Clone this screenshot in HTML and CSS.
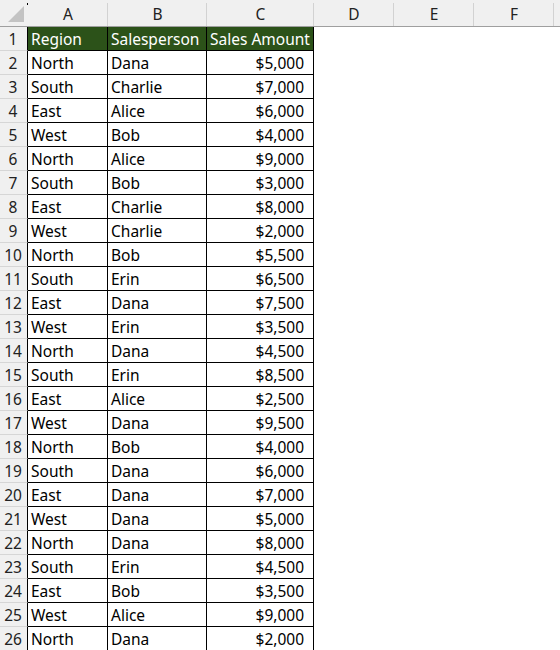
FILE: index.html
```html
<!DOCTYPE html>
<html lang="en">

<head>
  <meta charset="UTF-8">
  <meta name="viewport" content="width=device-width, initial-scale=1.0">
  <title>Sales</title>
  <link rel="stylesheet" href="styles.css">
</head>

<body>
  <table class="sheet">
    <colgroup>
      <col class="c-rn">
      <col class="c-a">
      <col class="c-b">
      <col class="c-c">
      <col class="c-d">
      <col class="c-e">
      <col class="c-f">
      <col class="c-rest">
    </colgroup>
    <tr class="head">
      <th class="corner">
        <svg width="17" height="17" viewBox="0 0 17 17"><polygon points="16,0 16,16 0,16" fill="#c3c3c3"/></svg>
      </th>
      <th>A</th>
      <th>B</th>
      <th>C</th>
      <th>D</th>
      <th>E</th>
      <th>F</th>
      <th class="rest"></th>
    </tr>
    <tr class="title">
      <th class="rn">1</th>
      <td>Region</td>
      <td>Salesperson</td>
      <td>Sales Amount</td>
      <td class="blank"></td><td class="blank"></td><td class="blank"></td><td class="blank"></td>
    </tr>
    <tr><th class="rn">2</th><td>North</td><td>Dana</td><td class="num">$5,000</td><td class="blank"></td><td class="blank"></td><td class="blank"></td><td class="blank"></td></tr>
    <tr><th class="rn">3</th><td>South</td><td>Charlie</td><td class="num">$7,000</td><td class="blank"></td><td class="blank"></td><td class="blank"></td><td class="blank"></td></tr>
    <tr><th class="rn">4</th><td>East</td><td>Alice</td><td class="num">$6,000</td><td class="blank"></td><td class="blank"></td><td class="blank"></td><td class="blank"></td></tr>
    <tr><th class="rn">5</th><td>West</td><td>Bob</td><td class="num">$4,000</td><td class="blank"></td><td class="blank"></td><td class="blank"></td><td class="blank"></td></tr>
    <tr><th class="rn">6</th><td>North</td><td>Alice</td><td class="num">$9,000</td><td class="blank"></td><td class="blank"></td><td class="blank"></td><td class="blank"></td></tr>
    <tr><th class="rn">7</th><td>South</td><td>Bob</td><td class="num">$3,000</td><td class="blank"></td><td class="blank"></td><td class="blank"></td><td class="blank"></td></tr>
    <tr><th class="rn">8</th><td>East</td><td>Charlie</td><td class="num">$8,000</td><td class="blank"></td><td class="blank"></td><td class="blank"></td><td class="blank"></td></tr>
    <tr><th class="rn">9</th><td>West</td><td>Charlie</td><td class="num">$2,000</td><td class="blank"></td><td class="blank"></td><td class="blank"></td><td class="blank"></td></tr>
    <tr><th class="rn">10</th><td>North</td><td>Bob</td><td class="num">$5,500</td><td class="blank"></td><td class="blank"></td><td class="blank"></td><td class="blank"></td></tr>
    <tr><th class="rn">11</th><td>South</td><td>Erin</td><td class="num">$6,500</td><td class="blank"></td><td class="blank"></td><td class="blank"></td><td class="blank"></td></tr>
    <tr><th class="rn">12</th><td>East</td><td>Dana</td><td class="num">$7,500</td><td class="blank"></td><td class="blank"></td><td class="blank"></td><td class="blank"></td></tr>
    <tr><th class="rn">13</th><td>West</td><td>Erin</td><td class="num">$3,500</td><td class="blank"></td><td class="blank"></td><td class="blank"></td><td class="blank"></td></tr>
    <tr><th class="rn">14</th><td>North</td><td>Dana</td><td class="num">$4,500</td><td class="blank"></td><td class="blank"></td><td class="blank"></td><td class="blank"></td></tr>
    <tr><th class="rn">15</th><td>South</td><td>Erin</td><td class="num">$8,500</td><td class="blank"></td><td class="blank"></td><td class="blank"></td><td class="blank"></td></tr>
    <tr><th class="rn">16</th><td>East</td><td>Alice</td><td class="num">$2,500</td><td class="blank"></td><td class="blank"></td><td class="blank"></td><td class="blank"></td></tr>
    <tr><th class="rn">17</th><td>West</td><td>Dana</td><td class="num">$9,500</td><td class="blank"></td><td class="blank"></td><td class="blank"></td><td class="blank"></td></tr>
    <tr><th class="rn">18</th><td>North</td><td>Bob</td><td class="num">$4,000</td><td class="blank"></td><td class="blank"></td><td class="blank"></td><td class="blank"></td></tr>
    <tr><th class="rn">19</th><td>South</td><td>Dana</td><td class="num">$6,000</td><td class="blank"></td><td class="blank"></td><td class="blank"></td><td class="blank"></td></tr>
    <tr><th class="rn">20</th><td>East</td><td>Dana</td><td class="num">$7,000</td><td class="blank"></td><td class="blank"></td><td class="blank"></td><td class="blank"></td></tr>
    <tr><th class="rn">21</th><td>West</td><td>Dana</td><td class="num">$5,000</td><td class="blank"></td><td class="blank"></td><td class="blank"></td><td class="blank"></td></tr>
    <tr><th class="rn">22</th><td>North</td><td>Dana</td><td class="num">$8,000</td><td class="blank"></td><td class="blank"></td><td class="blank"></td><td class="blank"></td></tr>
    <tr><th class="rn">23</th><td>South</td><td>Erin</td><td class="num">$4,500</td><td class="blank"></td><td class="blank"></td><td class="blank"></td><td class="blank"></td></tr>
    <tr><th class="rn">24</th><td>East</td><td>Bob</td><td class="num">$3,500</td><td class="blank"></td><td class="blank"></td><td class="blank"></td><td class="blank"></td></tr>
    <tr><th class="rn">25</th><td>West</td><td>Alice</td><td class="num">$9,000</td><td class="blank"></td><td class="blank"></td><td class="blank"></td><td class="blank"></td></tr>
    <tr><th class="rn">26</th><td>North</td><td>Dana</td><td class="num">$2,000</td><td class="blank"></td><td class="blank"></td><td class="blank"></td><td class="blank"></td></tr>
  </table>
</body>

</html>
```

FILE: styles.css
```css
html,
body {
  margin: 0;
  background: #fff;
}

.sheet {
  width: 560px;
  table-layout: fixed;
  border-collapse: separate;
  border-spacing: 0;
  font-family: "Noto Sans", "Liberation Sans", sans-serif;
  font-size: 15.5px;
  color: #000;
}

.c-rn { width: 28px; }
.c-a { width: 80px; }
.c-b { width: 99px; }
.c-c { width: 107px; }
.c-d,
.c-e,
.c-f { width: 80px; }
.c-rest { width: 6px; }

.sheet th,
.sheet td {
  box-sizing: border-box;
  padding: 0;
  height: 24px;
  line-height: 22px;
  padding-top: 1px;
  white-space: nowrap;
  overflow: hidden;
  font-weight: normal;
}

/* column letters */
.head th {
  height: 27px;
  line-height: 24px;
  padding-top: 2px;
  text-align: center;
  color: #222;
  background: linear-gradient(#d2d2d2, #d2d2d2) right bottom / 1px 23px no-repeat, #f0f0f0;
  border-bottom: 1px solid #9f9f9f;
}

.head th.rest {
  background: #f0f0f0;
}

.head .corner {
  background: linear-gradient(#000, #000) right 3px / 1px 2px no-repeat, #f0f0f0;
  padding: 0;
}

.corner svg {
  display: block;
  margin: 0 0 0 8px;
  position: relative;
  top: 1px;
}

/* row numbers */
.sheet .rn {
  text-align: center;
  color: #222;
  background: #f0f0f0;
  border-right: 1px solid #000;
  border-bottom: 1px solid #d6d6d6;
  padding-right: 1px;
}

.sheet td {
  padding-left: 3px;
  padding-right: 3px;
  border-right: 1px solid #000;
  border-bottom: 1px solid #000;
}

.sheet td.num {
  text-align: right;
  padding-right: 9px;
}

.title td {
  background: #2c5219;
  color: #fff;
}

.sheet td.blank {
  border: 0;
  background: #fff;
}
```
